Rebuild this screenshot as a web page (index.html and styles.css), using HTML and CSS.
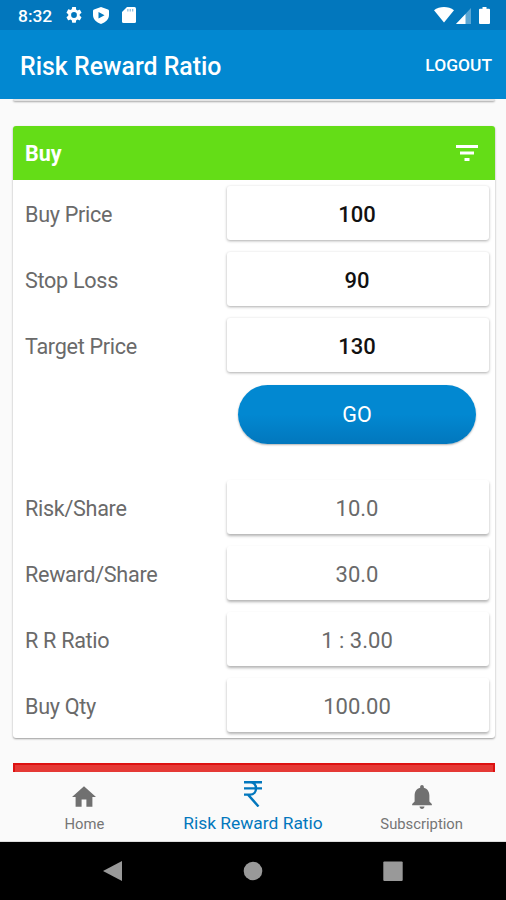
FILE: index.html
```html
<!DOCTYPE html>
<html lang="en">
<head>
    <meta charset="UTF-8">
    <meta name="viewport" content="width=device-width, initial-scale=1.0">
    <title>Risk Reward Ratio</title>
    <link rel="stylesheet" href="styles.css">
</head>
<body>
    <div class="status-bar">
        <span class="time">8:32</span>
        <svg class="icon-gear" viewBox="2 2 20 20"><path d="M19.14 12.94c.04-.3.06-.61.06-.94 0-.32-.02-.64-.07-.94l2.03-1.58a.49.49 0 0 0 .12-.61l-1.92-3.32a.49.49 0 0 0-.59-.22l-2.39.96a7.03 7.03 0 0 0-1.62-.94l-.36-2.54A.48.48 0 0 0 13.92 2h-3.84a.48.48 0 0 0-.47.41l-.36 2.54c-.59.24-1.13.57-1.62.94l-2.39-.96a.48.48 0 0 0-.59.22L2.74 8.87a.48.48 0 0 0 .12.61l2.03 1.58c-.05.3-.09.63-.09.94s.02.64.07.94l-2.03 1.58a.49.49 0 0 0-.12.61l1.92 3.32c.12.22.37.29.59.22l2.39-.96c.5.38 1.03.7 1.62.94l.36 2.54c.05.24.24.41.48.41h3.84c.24 0 .44-.17.47-.41l.36-2.54c.59-.24 1.13-.56 1.62-.94l2.39.96c.22.08.47 0 .59-.22l1.92-3.32a.48.48 0 0 0-.12-.61l-2.01-1.58zM12 15.6A3.6 3.6 0 1 1 12 8.4a3.6 3.6 0 0 1 0 7.2z"/></svg>
        <svg class="icon-shield" viewBox="0 0 16 17"><path fill-rule="evenodd" d="M8 0l7 2.6q1 .3 1 1.300v4.100c0 4-3.300 7.500-8 9-4.700-1.500-8-5-8-9V3.900q0-1 1-1.300zM5.500 5v6.600L11.500 8.300z"/></svg>
        <svg class="icon-card" viewBox="0 0 14 16"><path d="M5 0h7.500Q14 0 14 1.500v13q0 1.500-1.500 1.500h-11Q0 16 0 14.500V5z"/><path class="card-pins" d="M5.200 2h1.300v2.600H5.200zM7.600 2h1.300v2.600H7.600zM10 2h1.300v2.600H10z"/></svg>
        <div class="status-right">
            <svg class="icon-wifi" viewBox="0 0 20 16"><path d="M0 3.300C5.500-1.100 14.500-1.100 20 3.300L10 15.500z"/></svg>
            <svg class="icon-signal" viewBox="0 0 15 16"><path opacity=".35" d="M15 0v16H0z"/><path d="M9.500 5.900V16H0z"/></svg>
            <svg class="icon-battery" viewBox="0 0 11 17"><path d="M3.500 0h4v1.700H10q1 0 1 1V16q0 1-1 1H1q-1 0-1-1V2.700q0-1 1-1h2.500z"/></svg>
        </div>
    </div>

    <header class="app-bar">
        <h1>Risk Reward Ratio</h1>
        <a href="#" class="logout">LOGOUT</a>
    </header>

    <main class="content">
        <div class="previous-card"></div>
        <form class="card">
            <div class="card-header">
                <h2>Buy</h2>
                <svg class="icon-filter" viewBox="0 0 22 16"><path d="M0 0h22v3H0zM4 6.500h14v3H4zM8.500 13h5v3h-5z"/></svg>
            </div>
            <div class="row">
                <label for="buyPrice">Buy Price</label>
                <input type="text" id="buyPrice" value="100">
            </div>
            <div class="row">
                <label for="stopLoss">Stop Loss</label>
                <input type="text" id="stopLoss" value="90">
            </div>
            <div class="row">
                <label for="targetPrice">Target Price</label>
                <input type="text" id="targetPrice" value="130">
            </div>
            <button type="button" class="go">GO</button>
            <div class="row">
                <span class="label">Risk/Share</span>
                <span class="result">10.0</span>
            </div>
            <div class="row">
                <span class="label">Reward/Share</span>
                <span class="result">30.0</span>
            </div>
            <div class="row">
                <span class="label">R R Ratio</span>
                <span class="result">1 : 3.00</span>
            </div>
            <div class="row">
                <span class="label">Buy Qty</span>
                <span class="result">100.00</span>
            </div>
        </form>
        <div class="sell-header"></div>
    </main>

    <nav class="tabs">
        <a href="#" class="tab">
            <svg class="icon-home" viewBox="2 3 20 17"><path d="M10 20v-6h4v6h5v-8h3L12 3 2 12h3v8z"/></svg>
            <span>Home</span>
        </a>
        <a href="#" class="tab active">
            <svg class="icon-rupee" viewBox="0 0 18 26"><path d="M0 1.200h18M0 7.400h18M0 13.600h6c8 0 8-12.400 0-12.400M4 13.600L14.500 25.500"/></svg>
            <span>Risk Reward Ratio</span>
        </a>
        <a href="#" class="tab">
            <svg class="icon-bell" viewBox="4 2.500 16 19.500"><path d="M12 22c1.100 0 2-.9 2-2h-4c0 1.100.89 2 2 2zm6-6v-5c0-3.070-1.640-5.640-4.500-6.320V4c0-.83-.67-1.500-1.500-1.500s-1.500.67-1.500 1.500v.68C7.630 5.360 6 7.920 6 11v5l-2 2v1h16v-1z"/></svg>
            <span>Subscription</span>
        </a>
    </nav>

    <div class="system-nav">
        <svg viewBox="0 0 20 20"><path d="M19 0v20L0 10z"/></svg>
        <svg viewBox="0 0 20 20"><circle cx="10" cy="10" r="9.300"/></svg>
        <svg viewBox="0 0 20 20"><rect x=".3" y=".5" width="19.400" height="19.400" rx="1"/></svg>
    </div>
</body>
</html>
```

FILE: styles.css
```css
* {
    box-sizing: border-box;
}

body {
    font-family: Roboto, sans-serif;
    margin: 0;
    height: 900px;
    display: flex;
    flex-direction: column;
    background-color: #fafafa;
    overflow: hidden;
}

a {
    text-decoration: none;
}

svg {
    display: block;
    fill: #fff;
}

/* Status bar */
.status-bar {
    height: 30px;
    flex-shrink: 0;
    display: flex;
    align-items: center;
    padding: 0 16px 0 18px;
    background-color: #0277bd;
    color: #fff;
}

.time {
    width: 48px;
    font-size: 17.4px;
    font-weight: 500;
    line-height: 30px;
    padding-top: 2px;
}

.icon-gear {
    width: 16px;
    height: 16px;
}

.icon-shield {
    width: 16px;
    height: 17px;
    margin-left: 11px;
}

.icon-card {
    width: 14px;
    height: 16px;
    margin-left: 13px;
}

.card-pins {
    fill: #8fc0e0;
}

.status-right {
    display: flex;
    align-items: center;
    margin-left: auto;
}

.icon-wifi {
    width: 20px;
    height: 16px;
    margin-right: 2px;
}

.icon-signal {
    width: 15px;
    height: 16px;
    margin: 1px 8px 0 0;
}

.icon-battery {
    width: 11px;
    height: 17px;
}

/* App bar */
.app-bar {
    height: 69px;
    flex-shrink: 0;
    display: flex;
    align-items: center;
    justify-content: space-between;
    padding: 0 14px 0 20px;
    background-color: #0288d1;
    color: #fff;
    z-index: 1;
}

h1 {
    margin: 3px 0 0;
    font-size: 24.9px;
    font-weight: 500;
}

.logout {
    color: #fff;
    font-size: 17.4px;
    font-weight: 500;
}

/* Content */
.content {
    flex: 1;
    min-height: 0;
    overflow: hidden;
    padding: 0 11.5px 0 12.5px;
}

.previous-card {
    height: 2px;
    margin-bottom: 25px;
    background-color: #e4e4e4;
    border-radius: 0 0 3px 3px;
    box-shadow: 0 1px 2px rgba(0, 0, 0, 0.35);
}

.card {
    height: 612px;
    margin: 0 0 25px;
    background-color: #fff;
    border-radius: 3px;
    box-shadow: 0 1px 2px rgba(0, 0, 0, 0.38);
}

.card-header {
    height: 54px;
    margin-bottom: 6px;
    display: flex;
    align-items: center;
    justify-content: space-between;
    padding: 0 16.5px 0 12.5px;
    background-color: #64dd17;
    border-radius: 3px 3px 0 0;
    color: #fff;
}

h2 {
    margin: 0;
    font-size: 21.5px;
    font-weight: 700;
}

.icon-filter {
    width: 22px;
    height: 16px;
}

.row {
    height: 54px;
    margin-bottom: 12px;
    display: flex;
    align-items: center;
    padding: 0 6px 0 12.5px;
    font-size: 21.6px;
}

.row label, .label {
    flex: 1;
    padding-top: 3px;
    color: #6a6a6a;
    letter-spacing: -0.3px;
}

.row input, .result {
    width: 262px;
    height: 54px;
    padding: 3px 1px 0 0;
    border: none;
    border-radius: 3px;
    background-color: #fff;
    box-shadow: 0 1px 3px rgba(0, 0, 0, 0.33);
    font-family: inherit;
    font-size: 22px;
    line-height: 51px;
    text-align: center;
}

.row input {
    color: #111;
    font-weight: 500;
    outline: none;
}

.result {
    color: #6a6a6a;
    box-shadow: 0 2px 3px rgba(0, 0, 0, 0.3);
}

.go {
    display: block;
    width: 238px;
    height: 59px;
    margin: 13px 18.5px 36px auto;
    padding: 0;
    border: none;
    border-radius: 30px;
    background: linear-gradient(#0288d1 50%, #0277bd);
    box-shadow: 0 1px 2px rgba(0, 0, 0, 0.3);
    color: #fff;
    font-family: inherit;
    font-size: 21.5px;
}

.sell-header {
    height: 54px;
    background-color: #e53935;
    border: 2px solid #dd1111;
}

/* Bottom tabs */
.tabs {
    height: 70px;
    flex-shrink: 0;
    display: grid;
    grid-template-columns: repeat(3, 1fr);
    background-color: #fafafa;
    border-bottom: 1px solid #ddd;
}

.tab {
    display: flex;
    flex-direction: column;
    align-items: center;
    justify-content: flex-end;
    padding-bottom: 7px;
    color: #757575;
    font-size: 14.8px;
    line-height: 20px;
    white-space: nowrap;
}

.tab svg {
    fill: #707070;
}

.tab.active {
    padding-bottom: 8px;
    color: #0277bd;
    font-size: 17.4px;
}

.icon-home {
    width: 24px;
    height: 21px;
    margin-bottom: 7px;
}

.tab .icon-rupee {
    width: 18px;
    height: 26px;
    margin-bottom: 6px;
    fill: none;
    stroke: #0277bd;
    stroke-width: 2.4;
}

.icon-bell {
    width: 20px;
    height: 24px;
    margin-bottom: 5px;
}

/* System navigation */
.system-nav {
    height: 58px;
    flex-shrink: 0;
    display: flex;
    align-items: center;
    justify-content: center;
    gap: 120px;
    background-color: #000;
}

.system-nav svg {
    width: 20px;
    height: 20px;
    fill: #999;
}
```
